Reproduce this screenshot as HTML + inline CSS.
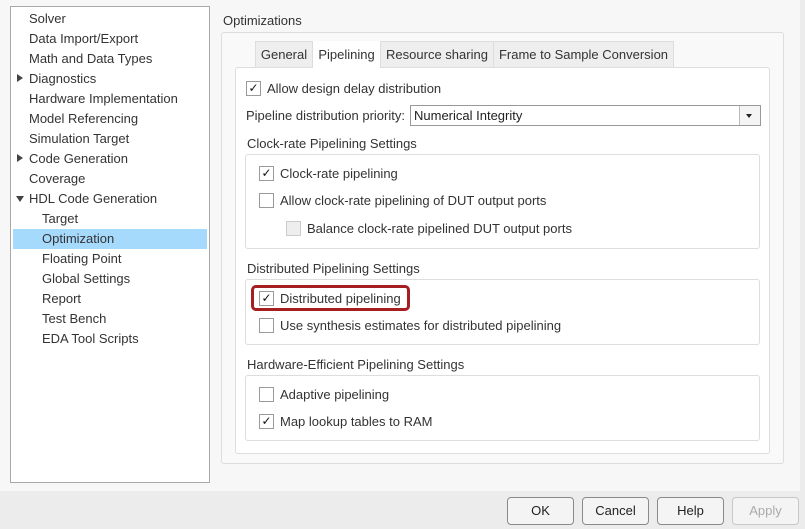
<!DOCTYPE html>
<html><head><style>
*{box-sizing:border-box;margin:0;padding:0}
body{width:805px;height:529px;background:#f7f7f7;font-family:"Liberation Sans",sans-serif;font-size:13px;color:#333;position:relative;overflow:hidden}
.a{position:absolute;white-space:nowrap}
.t{position:absolute;left:10px;top:6px;width:200px;height:477px;background:#fff;border:1px solid #a8a8a8}
.it{position:absolute;height:20px;line-height:20px;white-space:nowrap;margin-top:1px}
.sel{background:#a6dafd;margin-top:0}
.tri{position:absolute;width:0;height:0;margin-top:1px}
.cb{position:absolute;width:15px;height:15px;border:1px solid #9a9a9a;background:#fff;font-size:12px;line-height:13px;text-align:center;color:#111}
.cb.dis{border-color:#ccc;background:#eee}
.box{position:absolute;border:1px solid #ddd;border-radius:3px;background:#fff}
.tab{position:absolute;top:41px;height:26px;line-height:26px;background:#eee;border:1px solid #ddd;border-bottom:none;text-align:center;color:#333}
.btn{position:absolute;top:497px;width:67px;height:28px;border:1px solid #8a8a8a;border-radius:4px;background:#f4f4f4;text-align:center;line-height:26px;color:#222}
</style></head><body>
<div class="t">
<div class="it" style="left:18px;top:1px">Solver</div>
<div class="it" style="left:18px;top:21px">Data Import/Export</div>
<div class="it" style="left:18px;top:41px">Math and Data Types</div>
<div class="tri" style="left:6px;top:66px;border-left:6px solid #444;border-top:4px solid transparent;border-bottom:4px solid transparent"></div>
<div class="it" style="left:18px;top:61px">Diagnostics</div>
<div class="it" style="left:18px;top:81px">Hardware Implementation</div>
<div class="it" style="left:18px;top:101px">Model Referencing</div>
<div class="it" style="left:18px;top:121px">Simulation Target</div>
<div class="tri" style="left:6px;top:146px;border-left:6px solid #444;border-top:4px solid transparent;border-bottom:4px solid transparent"></div>
<div class="it" style="left:18px;top:141px">Code Generation</div>
<div class="it" style="left:18px;top:161px">Coverage</div>
<div class="tri" style="left:5px;top:188px;border-top:6px solid #444;border-left:4px solid transparent;border-right:4px solid transparent"></div>
<div class="it" style="left:18px;top:181px">HDL Code Generation</div>
<div class="it" style="left:31px;top:201px">Target</div>
<div class="it sel" style="left:2px;width:194px;top:222px;padding-left:29px">Optimization</div>
<div class="it" style="left:31px;top:241px">Floating Point</div>
<div class="it" style="left:31px;top:261px">Global Settings</div>
<div class="it" style="left:31px;top:281px">Report</div>
<div class="it" style="left:31px;top:301px">Test Bench</div>
<div class="it" style="left:31px;top:321px">EDA Tool Scripts</div>
</div>
<div class="a" style="left:223px;top:13px">Optimizations</div>
<div class="box" style="left:221px;top:32px;width:563px;height:432px;background:#f9f9f9"></div>
<div class="tab" style="left:255px;width:58px">General</div>
<div class="tab" style="left:312px;width:69px;background:#fff;height:28px">Pipelining</div>
<div class="tab" style="left:380px;width:114px">Resource sharing</div>
<div class="tab" style="left:493px;width:181px">Frame to Sample Conversion</div>
<div class="box" style="left:235px;top:67px;width:535px;height:387px"></div>
<div class="tab" style="left:313px;width:67px;background:#fff;border:none;height:28px;line-height:27px">Pipelining</div>
<div class="cb" style="left:246px;top:81px">✓</div><div class="a" style="left:267px;top:81px">Allow design delay distribution</div>
<div class="a" style="left:246px;top:108px">Pipeline distribution priority:</div>
<div class="a" style="left:410px;top:105px;width:351px;height:21px;border:1px solid #999;background:#fff;padding-left:3px;line-height:19px;color:#222">Numerical Integrity
<div style="position:absolute;right:0;top:0;width:21px;height:19px;border-left:1px solid #bbb;background:#f4f4f4"><div style="position:absolute;left:6px;top:8px;border-top:4px solid #222;border-left:3.5px solid transparent;border-right:3.5px solid transparent"></div></div></div>
<div class="a" style="left:247px;top:136px">Clock-rate Pipelining Settings</div>
<div class="box" style="left:245px;top:154px;width:515px;height:95px"></div>
<div class="cb" style="left:259px;top:166px">✓</div><div class="a" style="left:280px;top:166px">Clock-rate pipelining</div>
<div class="cb" style="left:259px;top:193px"></div><div class="a" style="left:280px;top:193px">Allow clock-rate pipelining of DUT output ports</div>
<div class="cb dis" style="left:286px;top:221px"></div><div class="a" style="left:307px;top:221px">Balance clock-rate pipelined DUT output ports</div>
<div class="a" style="left:247px;top:261px">Distributed Pipelining Settings</div>
<div class="box" style="left:245px;top:279px;width:515px;height:66px"></div>
<div class="a" style="left:251px;top:285px;width:159px;height:26px;border:3px solid #a51e22;border-radius:5px"></div>
<div class="cb" style="left:259px;top:291px">✓</div><div class="a" style="left:280px;top:291px">Distributed pipelining</div>
<div class="cb" style="left:259px;top:318px"></div><div class="a" style="left:280px;top:318px">Use synthesis estimates for distributed pipelining</div>
<div class="a" style="left:247px;top:357px">Hardware-Efficient Pipelining Settings</div>
<div class="box" style="left:245px;top:375px;width:515px;height:66px"></div>
<div class="cb" style="left:259px;top:387px"></div><div class="a" style="left:280px;top:387px">Adaptive pipelining</div>
<div class="cb" style="left:259px;top:414px">✓</div><div class="a" style="left:280px;top:414px">Map lookup tables to RAM</div>
<div class="a" style="left:0;top:491px;width:805px;height:38px;background:#ececec"></div>
<div class="a" style="left:800px;top:0;width:5px;height:491px;background:#ececec"></div>
<div class="btn" style="left:507px">OK</div>
<div class="btn" style="left:582px">Cancel</div>
<div class="btn" style="left:657px">Help</div>
<div class="btn" style="left:732px;border-color:#c8c8c8;color:#aaa">Apply</div>
</body></html>
